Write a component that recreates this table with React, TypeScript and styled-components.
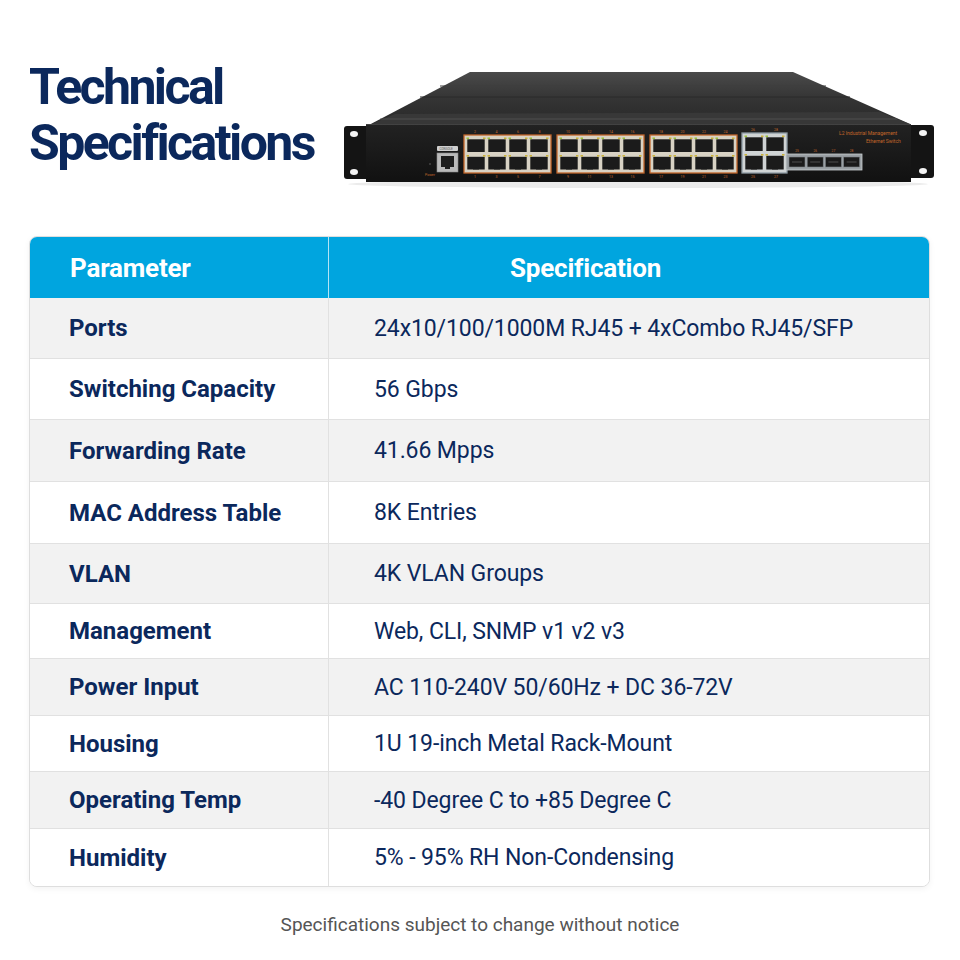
import React from 'react';
import styled, { createGlobalStyle } from 'styled-components';

const GlobalStyle = createGlobalStyle`
  html, body {
    margin: 0;
    padding: 0;
    background: #ffffff;
  }
  body {
    font-family: Roboto, 'Liberation Sans', Arial, sans-serif;
  }
`;

const specs: [string, string, number][] = [
  ['Ports', '24x10/100/1000M RJ45 + 4xCombo RJ45/SFP', 61],
  ['Switching Capacity', '56 Gbps', 61],
  ['Forwarding Rate', '41.66 Mpps', 62],
  ['MAC Address Table', '8K Entries', 62],
  ['VLAN', '4K VLAN Groups', 60],
  ['Management', 'Web, CLI, SNMP v1 v2 v3', 55],
  ['Power Input', 'AC 110-240V 50/60Hz + DC 36-72V', 57],
  ['Housing', '1U 19-inch Metal Rack-Mount', 56],
  ['Operating Temp', '-40 Degree C to +85 Degree C', 57],
  ['Humidity', '5% - 95% RH Non-Condensing', 57],
];

const ORANGE = '#c2662a';

// one block of RJ45 jacks, drawn as a grid of beige cells with dark openings
function PortBlock({
  x,
  y,
  w,
  h,
  cols,
  rows,
  frame,
  fill,
}: {
  x: number;
  y: number;
  w: number;
  h: number;
  cols: number;
  rows: number;
  frame: string;
  fill: string;
}) {
  const cw = (w - 3) / cols;
  const ch = (h - 3) / rows;
  const cells: React.ReactNode[] = [];
  for (let r = 0; r < rows; r++) {
    for (let c = 0; c < cols; c++) {
      const cx = x + 1.5 + c * cw;
      const cy = y + 1.5 + r * ch;
      cells.push(
        <g key={`${r}-${c}`}>
          <rect x={cx + 1.8} y={cy + 2.8} width={cw - 3.6} height={ch - 4.8} fill="#1b1b1b" />
          <rect x={cx + cw / 2 - 3} y={cy + ch - 4} width={6} height={2} fill="#1b1b1b" />
          <rect x={cx + 1} y={cy + 1} width={2.5} height={1.6} fill={r === 0 ? '#9bbf3c' : '#c9b23a'} />
          <rect x={cx + cw - 3.5} y={cy + 1} width={2.5} height={1.6} fill="#c9b23a" />
        </g>,
      );
    }
  }
  return (
    <g>
      <rect x={x} y={y} width={w} height={h} fill={fill} stroke={frame} strokeWidth={1.3} />
      {cells}
    </g>
  );
}

function SwitchDrawing() {
  const topNums = ['2', '4', '6', '8', '10', '12', '14', '16', '18', '20', '22', '24'];
  const botNums = ['1', '3', '5', '7', '9', '11', '13', '15', '17', '19', '21', '23'];
  const groupX = [464, 557, 650];
  return (
    <svg width="600" height="126" viewBox="336 64 600 126">
      <defs>
        <linearGradient id="lid" x1="0" y1="0" x2="0" y2="1">
          <stop offset="0" stopColor="#4a4a4a" />
          <stop offset="0.5" stopColor="#343434" />
          <stop offset="1" stopColor="#282828" />
        </linearGradient>
        <linearGradient id="face" x1="0" y1="0" x2="0" y2="1">
          <stop offset="0" stopColor="#222" />
          <stop offset="1" stopColor="#111" />
        </linearGradient>
      </defs>
      <ellipse cx="638" cy="184" rx="290" ry="4" fill="rgba(0,0,0,0.08)" />
      {/* lid */}
      <polygon points="470,72 793,72 910,124 367,126" fill="url(#lid)" />
      <polygon points="395,114 880,112 910,124 367,126" fill="#3d3d3d" opacity="0.7" />
      <line x1="440" y1="86" x2="826" y2="86" stroke="#3f3f3f" strokeWidth="1" />
      <line x1="420" y1="97" x2="850" y2="97" stroke="#2b2b2b" strokeWidth="1" />
      <line x1="380" y1="119" x2="897" y2="119" stroke="#555" strokeWidth="0.8" />
      {/* ears */}
      <rect x="344" y="126" width="26" height="53" rx="3" fill="#141414" />
      <rect x="907" y="125" width="27" height="53" rx="3" fill="#141414" />
      <ellipse cx="354" cy="134" rx="4" ry="3" fill="#f4f4f4" />
      <ellipse cx="354" cy="172" rx="4" ry="3" fill="#f4f4f4" />
      <ellipse cx="923" cy="133" rx="4" ry="3" fill="#f4f4f4" />
      <ellipse cx="923" cy="171" rx="4" ry="3" fill="#f4f4f4" />
      {/* front face */}
      <rect x="366" y="124" width="545" height="58" fill="url(#face)" />
      <line x1="366" y1="124.5" x2="911" y2="124.5" stroke="#4a4a4a" strokeWidth="0.8" />
      {/* console + power */}
      <circle cx="430" cy="164" r="1" fill="#444" />
      <text x="425" y="176" fontSize="3.5" fill={ORANGE} fontFamily="Roboto, sans-serif">Power</text>
      <rect x="437" y="146" width="21" height="5" rx="1" fill="#cfcfcf" />
      <text x="439.5" y="149.6" fontSize="3" fill="#555" fontFamily="Roboto, sans-serif">CONSOLE</text>
      <rect x="437" y="153" width="21" height="19" fill="#b9b9b9" stroke="#8a8a8a" strokeWidth="0.6" />
      <rect x="441" y="156" width="13" height="11" fill="#1d1d1d" />
      <rect x="445" y="167" width="5" height="2" fill="#1d1d1d" />
      {/* rj45 groups */}
      {groupX.map((gx, gi) => (
        <g key={gx}>
          <PortBlock x={gx} y={135} w={87} h={38} cols={4} rows={2} frame={ORANGE} fill="#d8d2c4" />
          {[0, 1, 2, 3].map(i => (
            <g key={i}>
              <text
                x={gx + 11 + i * 21.5}
                y={133}
                fontSize="3.5"
                textAnchor="middle"
                fill={ORANGE}
                fontFamily="Roboto, sans-serif"
              >
                {topNums[gi * 4 + i]}
              </text>
              <text
                x={gx + 11 + i * 21.5}
                y={178}
                fontSize="3.5"
                textAnchor="middle"
                fill={ORANGE}
                fontFamily="Roboto, sans-serif"
              >
                {botNums[gi * 4 + i]}
              </text>
            </g>
          ))}
        </g>
      ))}
      {/* combo rj45 */}
      <PortBlock x={742} y={133} w={45} h={40} cols={2} rows={2} frame="#8e9aa3" fill="#cfd3d4" />
      <text x="753" y="131" fontSize="3.5" textAnchor="middle" fill={ORANGE} fontFamily="Roboto, sans-serif">26</text>
      <text x="776" y="131" fontSize="3.5" textAnchor="middle" fill={ORANGE} fontFamily="Roboto, sans-serif">28</text>
      <text x="753" y="178" fontSize="3.5" textAnchor="middle" fill={ORANGE} fontFamily="Roboto, sans-serif">25</text>
      <text x="776" y="178" fontSize="3.5" textAnchor="middle" fill={ORANGE} fontFamily="Roboto, sans-serif">27</text>
      {/* sfp cages */}
      <rect x="786" y="154" width="76" height="16" fill="#9aa0a4" stroke="#c9cdd0" strokeWidth="0.8" />
      {[0, 1, 2, 3].map(i => (
        <g key={i}>
          <rect x={789 + i * 18.2} y={157} width={16} height={10} fill="#1a1a1a" stroke="#7d8388" strokeWidth="0.6" />
          <rect x={792 + i * 18.2} y={161} width={10} height={2} fill="#333" />
          <text
            x={797 + i * 18.2}
            y={152}
            fontSize="3.2"
            textAnchor="middle"
            fill={ORANGE}
            fontFamily="Roboto, sans-serif"
          >
            {25 + i}
          </text>
        </g>
      ))}
      {/* model label */}
      <text x="839" y="135" fontSize="5" fill={ORANGE} fontFamily="Roboto, sans-serif">
        L2 Industrial Management
      </text>
      <text x="866" y="143" fontSize="5" fill={ORANGE} fontFamily="Roboto, sans-serif">
        Ethernet Switch
      </text>
    </svg>
  );
}

export default function App() {
  return (
    <Page>
      <GlobalStyle />
      <Hero>
        <Title>
          Technical
          <br />
          Specifications
        </Title>
        <Product>
          <SwitchDrawing />
        </Product>
      </Hero>
      <Table>
        <HeadRow>
          <HeadCell $pad={40} $divider>
            Parameter
          </HeadCell>
          <HeadCell $pad={181}>Specification</HeadCell>
        </HeadRow>
        {specs.map(([name, value, h], i) => (
          <Row key={name} $h={h} $shaded={i % 2 === 0} $last={i === specs.length - 1}>
            <ParamCell>{name}</ParamCell>
            <ValueCell>{value}</ValueCell>
          </Row>
        ))}
      </Table>
      <Footnote>Specifications subject to change without notice</Footnote>
    </Page>
  );
}

const Page = styled.div`
  width: 960px;
  height: 960px;
  background: #ffffff;
  overflow: hidden;
`;

const Hero = styled.div`
  display: flex;
  align-items: flex-start;
  height: 236px;
  padding-left: 29px;
  box-sizing: border-box;
`;

const Title = styled.h1`
  margin: 59px 0 0;
  font-family: Roboto, 'Liberation Sans', sans-serif;
  font-weight: 700;
  font-size: 50px;
  line-height: 56px;
  letter-spacing: -2.6px;
  color: #0b285c;
`;

const Product = styled.div`
  margin: 64px 24px 0 auto;
  display: flex;
`;

const Table = styled.div`
  margin: 0 30px 0 29px;
  border: 1px solid #dedede;
  border-radius: 8px;
  overflow: hidden;
  background: #ffffff;
  box-shadow: 0 2px 6px rgba(0, 0, 0, 0.05);
`;

const HeadRow = styled.div`
  display: grid;
  grid-template-columns: 299px 1fr;
  height: 61px;
  background: #00a5df;
`;

const HeadCell = styled.div<{ $pad: number; $divider?: boolean }>`
  display: flex;
  align-items: center;
  padding-left: ${p => p.$pad}px;
  font-size: 26px;
  font-weight: 700;
  letter-spacing: -0.2px;
  color: #ffffff;
  border-right: ${p => (p.$divider ? '1px solid rgba(255,255,255,0.7)' : 'none')};
`;

const Row = styled.div<{ $h: number; $shaded: boolean; $last: boolean }>`
  display: grid;
  grid-template-columns: 299px 1fr;
  height: ${p => p.$h}px;
  box-sizing: border-box;
  background: ${p => (p.$shaded ? '#f2f2f2' : '#ffffff')};
  border-bottom: ${p => (p.$last ? 'none' : '1px solid #e1e1e1')};
`;

const ParamCell = styled.div`
  display: flex;
  align-items: center;
  padding-left: 39px;
  border-right: 1px solid #e1e1e1;
  font-size: 24px;
  font-weight: 700;
  letter-spacing: 0;
  color: #0b285c;
`;

const ValueCell = styled.div`
  display: flex;
  align-items: center;
  padding-left: 45px;
  font-size: 23px;
  font-weight: 400;
  letter-spacing: -0.1px;
  color: #0b285c;
`;

const Footnote = styled.p`
  margin: 26px 0 0;
  text-align: center;
  font-size: 19px;
  color: #555555;
`;
